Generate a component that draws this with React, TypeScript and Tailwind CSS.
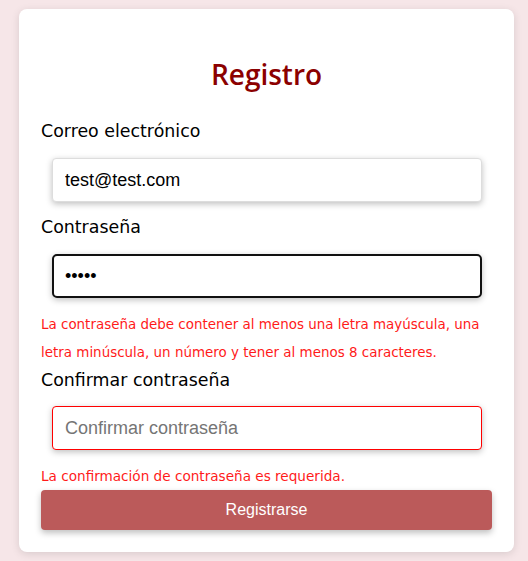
export default function App() {
    return (
        <div className="min-h-[561px] bg-[#f6e6e8] px-[19px] pt-[9px]">
            <div className="w-[495px] rounded-lg bg-white px-[22px] pt-[46px] pb-[22px] shadow-[0_2px_8px_rgba(0,0,0,0.12)]">
                {/* Title */}
                <h2 className="text-center text-[28px] leading-[38px] font-semibold text-[#8b0000] [font-family:'Open_Sans',sans-serif]">
                    Registro
                </h2>

                <form className="mt-[25px] flex flex-col" onSubmit={(e) => e.preventDefault()}>
                    <label className="text-[17.4px] leading-[26px] text-black [font-family:'DejaVu_Sans',sans-serif]">
                        Correo electrónico
                    </label>
                    <input
                        type="email"
                        readOnly
                        value="test@test.com"
                        className="mt-[14px] ml-[11px] h-[44px] w-[430px] rounded border border-[#ddd] bg-white px-[12px] text-[18px] text-black shadow-[0_2px_6px_rgba(0,0,0,0.25)] outline-none [font-family:'Liberation_Sans',Arial,sans-serif]"
                    />

                    <label className="mt-[12px] text-[17.4px] leading-[26px] text-black [font-family:'DejaVu_Sans',sans-serif]">
                        Contraseña
                    </label>
                    <input
                        type="password"
                        readOnly
                        value="12345"
                        className="mt-[14px] ml-[11px] h-[44px] w-[430px] rounded-[5px] border-2 border-[#111] bg-white px-[11px] text-[18px] text-black shadow-[0_2px_6px_rgba(0,0,0,0.25)] outline-none [font-family:'Liberation_Sans',Arial,sans-serif]"
                    />
                    <p className="mt-[13px] text-[13.45px] leading-[28px] text-[#ff1a1a] [font-family:'DejaVu_Sans',sans-serif]">
                        La contraseña debe contener al menos una letra mayúscula, una letra minúscula, un número y tener al menos 8 caracteres.
                    </p>

                    <label className="text-[17.4px] leading-[26px] text-black [font-family:'DejaVu_Sans',sans-serif]">
                        Confirmar contraseña
                    </label>
                    <input
                        type="password"
                        readOnly
                        placeholder="Confirmar contraseña"
                        className="mt-[13px] ml-[11px] h-[44px] w-[430px] rounded border border-[#ff0000] bg-white px-[12px] text-[18px] text-black shadow-[0_2px_6px_rgba(0,0,0,0.25)] outline-none placeholder:text-[#757575] [font-family:'Liberation_Sans',Arial,sans-serif]"
                    />
                    <p className="mt-[12px] text-[13.6px] leading-[28px] text-[#ff1a1a] [font-family:'DejaVu_Sans',sans-serif]">
                        La confirmación de contraseña es requerida.
                    </p>

                    <button
                        type="submit"
                        className="h-[40px] w-full rounded bg-[#bb5a5a] text-[16px] text-white shadow-[0_3px_6px_rgba(0,0,0,0.25)] [font-family:'Liberation_Sans',Arial,sans-serif]"
                    >
                        Registrarse
                    </button>
                </form>
            </div>
        </div>
    );
}
